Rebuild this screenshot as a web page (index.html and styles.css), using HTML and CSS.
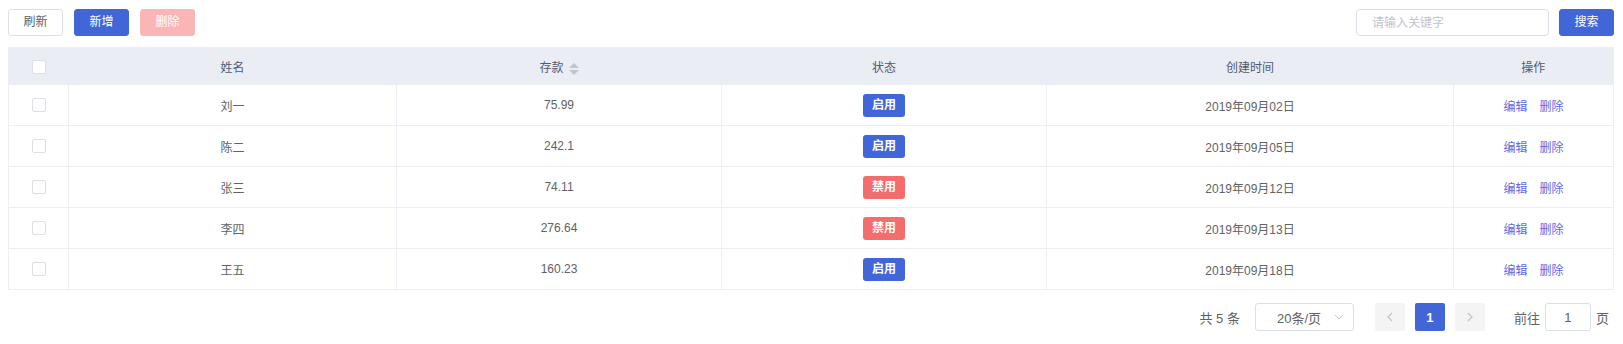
FILE: index.html
```html
<!DOCTYPE html>
<html lang="zh-CN">
<head>
    <meta charset="UTF-8">
    <meta name="viewport" content="width=device-width, initial-scale=1.0">
    <title>存款列表</title>
    <link rel="stylesheet" href="styles.css">
</head>
<body>
    <div class="page">
        <div class="toolbar">
            <div class="toolbar-left">
                <button class="btn btn-plain">刷新</button>
                <button class="btn btn-primary">新增</button>
                <button class="btn btn-danger-disabled">删除</button>
            </div>
            <div class="toolbar-right">
                <input class="search-input" type="text" placeholder="请输入关键字">
                <button class="btn btn-primary btn-search">搜索</button>
            </div>
        </div>

        <table class="data-table">
            <colgroup>
                <col style="width: 60px">
                <col style="width: 328px">
                <col style="width: 325px">
                <col style="width: 325px">
                <col style="width: 407px">
                <col>
            </colgroup>
            <thead>
                <tr>
                    <th><span class="checkbox"></span></th>
                    <th>姓名</th>
                    <th>存款<span class="sort-caret"><i class="up"></i><i class="down"></i></span></th>
                    <th>状态</th>
                    <th>创建时间</th>
                    <th>操作</th>
                </tr>
            </thead>
            <tbody>
                <tr>
                    <td><span class="checkbox"></span></td>
                    <td>刘一</td>
                    <td class="num">75.99</td>
                    <td><span class="tag tag-on">启用</span></td>
                    <td class="num">2019年09月02日</td>
                    <td><a class="link">编辑</a><a class="link">删除</a></td>
                </tr>
                <tr>
                    <td><span class="checkbox"></span></td>
                    <td>陈二</td>
                    <td class="num">242.1</td>
                    <td><span class="tag tag-on">启用</span></td>
                    <td class="num">2019年09月05日</td>
                    <td><a class="link">编辑</a><a class="link">删除</a></td>
                </tr>
                <tr>
                    <td><span class="checkbox"></span></td>
                    <td>张三</td>
                    <td class="num">74.11</td>
                    <td><span class="tag tag-off">禁用</span></td>
                    <td class="num">2019年09月12日</td>
                    <td><a class="link">编辑</a><a class="link">删除</a></td>
                </tr>
                <tr>
                    <td><span class="checkbox"></span></td>
                    <td>李四</td>
                    <td class="num">276.64</td>
                    <td><span class="tag tag-off">禁用</span></td>
                    <td class="num">2019年09月13日</td>
                    <td><a class="link">编辑</a><a class="link">删除</a></td>
                </tr>
                <tr>
                    <td><span class="checkbox"></span></td>
                    <td>王五</td>
                    <td class="num">160.23</td>
                    <td><span class="tag tag-on">启用</span></td>
                    <td class="num">2019年09月18日</td>
                    <td><a class="link">编辑</a><a class="link">删除</a></td>
                </tr>
            </tbody>
        </table>

        <div class="pagination">
            <span class="total">共 5 条</span>
            <div class="page-size">
                <span>20条/页</span>
                <svg class="select-arrow" width="10" height="6" viewBox="0 0 10 6"><path d="M1 1l4 4 4-4" fill="none" stroke="#c0c4cc" stroke-width="1"/></svg>
            </div>
            <button class="page-btn">
                <svg width="6" height="10" viewBox="0 0 6 10"><path d="M5 1L1 5l4 4" fill="none" stroke="#c0c4cc" stroke-width="1.2"/></svg>
            </button>
            <button class="page-btn page-active">1</button>
            <button class="page-btn">
                <svg width="6" height="10" viewBox="0 0 6 10"><path d="M1 1l4 4-4 4" fill="none" stroke="#c0c4cc" stroke-width="1.2"/></svg>
            </button>
            <span class="jump">前往</span>
            <input class="jump-input" type="text" value="1">
            <span class="jump-suffix">页</span>
        </div>
    </div>
</body>
</html>
```

FILE: styles.css
```css
body {
    margin: 0;
    padding: 0;
    background-color: #fff;
    font-family: "Liberation Sans", "Noto Sans CJK SC", sans-serif;
    font-size: 12px;
    color: #606266;
}

.page {
    padding: 9px 9px 0 8px;
}

.toolbar {
    display: flex;
    justify-content: space-between;
    align-items: center;
    margin-bottom: 11px;
}

.toolbar-left,
.toolbar-right {
    display: flex;
    gap: 11px;
}

.toolbar-right {
    gap: 10px;
}

.btn {
    height: 27px;
    width: 55px;
    padding: 0;
    border-radius: 3px;
    border: 1px solid transparent;
    font-family: inherit;
    font-size: 12px;
    line-height: 25px;
    cursor: pointer;
}

.btn-plain {
    background-color: #fff;
    border-color: #dcdfe6;
    color: #606266;
}

.btn-primary {
    background-color: #4066d8;
    border-color: #4066d8;
    color: #fff;
}

.btn-danger-disabled {
    background-color: #fab6b6;
    border-color: #fab6b6;
    color: #fff;
    cursor: not-allowed;
}

.search-input {
    box-sizing: border-box;
    width: 193px;
    height: 27px;
    padding: 0 15px;
    border: 1px solid #dcdfe6;
    border-radius: 4px;
    font-family: inherit;
    font-size: 12px;
    color: #606266;
    outline: none;
}

.search-input::placeholder {
    color: #c0c4cc;
}

.data-table {
    width: 100%;
    table-layout: fixed;
    border-collapse: collapse;
    border: 1px solid #ebeef5;
}

.data-table th {
    height: 37px;
    padding: 0;
    background-color: #eaedf4;
    color: #515a6e;
    font-weight: normal;
    text-align: center;
}

.data-table td {
    height: 40px;
    padding: 0;
    border-right: 1px solid #ebeef5;
    border-bottom: 1px solid #ebeef5;
    text-align: center;
    color: #606266;
}

.checkbox {
    display: inline-block;
    box-sizing: border-box;
    width: 14px;
    height: 14px;
    border: 1px solid #dcdfe6;
    border-radius: 2px;
    background-color: #fff;
    vertical-align: middle;
}

.sort-caret {
    display: inline-flex;
    flex-direction: column;
    gap: 2px;
    margin-left: 5px;
    vertical-align: middle;
}

.sort-caret i {
    width: 0;
    height: 0;
    border-left: 5px solid transparent;
    border-right: 5px solid transparent;
}

.sort-caret .up {
    border-bottom: 5px solid #c0c4cc;
}

.sort-caret .down {
    border-top: 5px solid #c0c4cc;
}

.tag {
    display: inline-block;
    width: 42px;
    height: 23px;
    line-height: 23px;
    border-radius: 3px;
    color: #fff;
    font-weight: bold;
    font-size: 12px;
}

.tag-on {
    background-color: #4066d8;
}

.tag-off {
    background-color: #f46d6d;
}

.link {
    color: #5f6ae0;
    cursor: pointer;
    margin: 0 6px;
}

.pagination {
    display: flex;
    justify-content: flex-end;
    align-items: center;
    margin-top: 13px;
    padding-right: 5px;
    font-size: 13px;
    color: #606266;
}

.total {
    margin-right: 15px;
}

.page-size {
    box-sizing: border-box;
    display: flex;
    align-items: center;
    justify-content: space-between;
    width: 99px;
    height: 28px;
    padding: 0 9px 0 21px;
    border: 1px solid #dcdfe6;
    border-radius: 3px;
    margin-right: 21px;
}

.page-btn {
    display: flex;
    align-items: center;
    justify-content: center;
    width: 30px;
    height: 28px;
    padding: 0;
    margin-right: 10px;
    border: none;
    border-radius: 2px;
    background-color: #f4f4f5;
    font-family: inherit;
    font-size: 13px;
    font-weight: bold;
    color: #606266;
}

.page-active {
    background-color: #4066d8;
    color: #fff;
}

.jump {
    margin-left: 19px;
    margin-right: 5px;
}

.jump-input {
    box-sizing: border-box;
    width: 46px;
    height: 28px;
    border: 1px solid #dcdfe6;
    border-radius: 3px;
    text-align: center;
    font-family: inherit;
    font-size: 13px;
    color: #606266;
    outline: none;
}

.jump-suffix {
    margin-left: 5px;
}
```
